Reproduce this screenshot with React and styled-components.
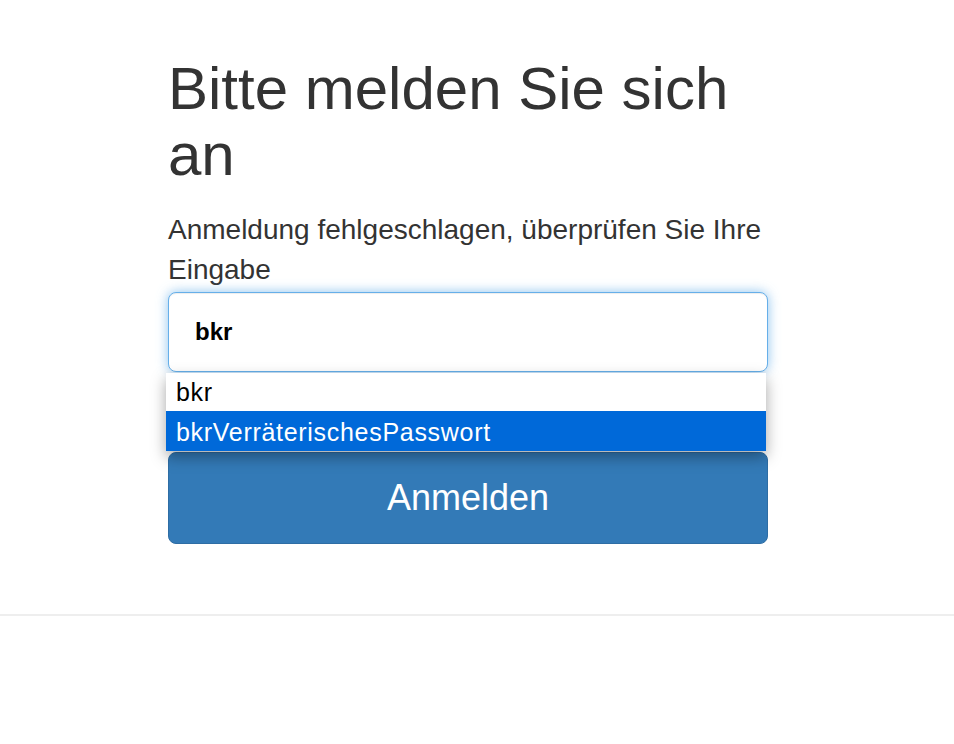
import React from 'react'
import styled, { createGlobalStyle } from 'styled-components'

const GlobalStyle = createGlobalStyle`
  html, body {
    margin: 0;
    padding: 0;
    background: #fff;
  }
  body {
    font-family: 'Liberation Sans', Arial, sans-serif;
    color: #333;
  }
`

const Page = styled.div`
  width: 954px;
  height: 744px;
  overflow: hidden;
`

const Container = styled.div`
  width: 600px;
  margin-left: 168px;
  padding-top: 56px;
`

const Heading = styled.h1`
  margin: 0;
  font-size: 60px;
  line-height: 66px;
  font-weight: 400;
  color: #333;
`

const Message = styled.p`
  margin: 22px 0 0;
  font-size: 28px;
  line-height: 40px;
  color: #333;
`

const Form = styled.form`
  margin: 2px 0 0;
  display: flex;
  flex-direction: column;
`

const Field = styled.div`
  position: relative;
`

const Input = styled.input`
  box-sizing: border-box;
  display: block;
  width: 600px;
  height: 80px;
  padding: 0 26px;
  border: 1px solid #66afe9;
  border-radius: 8px;
  outline: none;
  box-shadow: inset 0 1px 1px rgba(0, 0, 0, 0.075), 0 0 12px rgba(102, 175, 233, 0.75);
  font-family: 'Liberation Sans', Arial, sans-serif;
  font-size: 24px;
  font-weight: 700;
  color: #000;
  background: #fff;
`

const Suggestions = styled.ul`
  position: absolute;
  left: -2px;
  top: 81px;
  width: 600px;
  margin: 0;
  padding: 0;
  list-style: none;
  background: #fff;
  box-shadow: 0 6px 14px rgba(0, 0, 0, 0.35);
  z-index: 2;
`

const Suggestion = styled.li`
  height: ${(p) => (p.active ? '40px' : '38px')};
  line-height: ${(p) => (p.active ? '42px' : '38px')};
  padding: 0 10px;
  font-size: 25px;
  letter-spacing: 0.7px;
  color: ${(p) => (p.active ? '#fff' : '#000')};
  background: ${(p) => (p.active ? '#0069d9' : '#fff')};
`

const Button = styled.button`
  box-sizing: border-box;
  margin-top: 80px;
  width: 600px;
  height: 92px;
  border: 1px solid #2e6da4;
  border-radius: 8px;
  background: #337ab7;
  color: #fff;
  font-family: 'Liberation Sans', Arial, sans-serif;
  font-size: 36px;
  cursor: pointer;
`

const Rule = styled.hr`
  margin: 70px 0 0;
  border: 0;
  border-top: 2px solid #eee;
`

export default function App() {
  return (
    <Page>
      <GlobalStyle />
      <Container>
        <Heading>Bitte melden Sie sich an</Heading>
        <Message>Anmeldung fehlgeschlagen, überprüfen Sie Ihre Eingabe</Message>
        <Form onSubmit={(e) => e.preventDefault()}>
          <Field>
            <Input type="text" defaultValue="bkr" />
            <Suggestions>
              <Suggestion>bkr</Suggestion>
              <Suggestion active>bkrVerräterischesPasswort</Suggestion>
            </Suggestions>
          </Field>
          <Button type="submit">Anmelden</Button>
        </Form>
      </Container>
      <Rule />
    </Page>
  )
}
